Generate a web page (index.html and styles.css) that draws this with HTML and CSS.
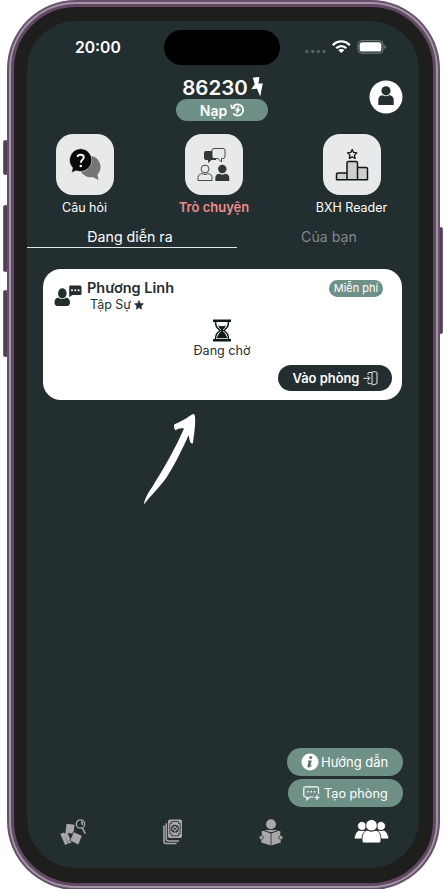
FILE: index.html
```html
<!DOCTYPE html>
<html lang="vi">
<head>
<meta charset="utf-8">
<title>Trò chuyện</title>
<link rel="stylesheet" href="styles.css">
</head>
<body>
<div class="stage">
  <i class="key key-action"></i><i class="key key-up"></i><i class="key key-down"></i><i class="key key-power"></i>
  <div class="phone"><div class="rim"><div class="bezel"><main class="screen">
    <div class="status">
      <span class="time">20:00</span>
      <span class="island"></span>
      <svg class="signals" width="82" height="16" viewBox="0 0 82 16">
        <g fill="#566162"><circle cx="2" cy="11.500" r="1.700"/><circle cx="7.700" cy="11.500" r="1.700"/><circle cx="13.300" cy="11.500" r="1.700"/><circle cx="19" cy="11.500" r="1.700"/></g>
        <g fill="none" stroke="#fff" stroke-width="2.300"><path d="M27.800 5.200C32.800.2 39.800.2 44.800 5.200M31.200 8.300c2.800-2.900 7.400-2.900 10.200 0"/></g>
        <path d="M33.200 10c1.900-1.500 4.300-1.500 6.200 0l-3.100 3.100z" fill="#fff"/>
        <rect x="53" y=".7" width="25" height="12.500" rx="3.800" fill="none" stroke="#7b8586"/>
        <rect x="54.600" y="2.300" width="21.800" height="9.300" rx="2.600" fill="#fff"/><path d="M79.500 4.700c2 .8 2 3.500 0 4.300z" fill="#7b8586"/>
      </svg>
    </div>
    <header class="header">
      <div class="balance">
        <div class="amount"><span>86230</span><svg width="12" height="20" viewBox="0 0 12 20"><path d="M1.800.7 8.400 0 7.500 6.700l4.300-.4L9.200 19.400 6 11.800.2 12.200 3.700 7.300z" fill="#fff"/></svg></div>
        <div class="topup"><span>Nạp</span><svg width="15" height="14" viewBox="0 0 15 14"><path d="M3 3.800A5.600 5.600 0 1 1 3.200 10.500M.8 1.800 2 5.200l3.600-.7" fill="none" stroke="#fff" stroke-width="1.700"/><path d="M8.700 3 5.200 7.700h2L6.500 11l3.900-4.800H8.200z" fill="#fff" stroke="#fff" stroke-width=".5"/></svg></div>
      </div>
      <svg class="avatar" width="34" height="34" viewBox="0 0 34 34"><circle cx="17" cy="17" r="16.500" fill="#fff"/><circle cx="17" cy="10.800" r="4.600" fill="#232e30"/><path d="M9.300 25v-5c0-3 2-4.700 4.300-4.700 2 1.200 4.400 1.200 6.400 0 2.500 0 4.700 1.700 4.700 4.700v5z" fill="#232e30"/></svg>
    </header>
    <section class="shortcuts">
      <div class="shortcut"><div class="tile"><svg width="58" height="61" viewBox="0 0 58 61">
        <path d="M35 22a11 11 0 0 1 6.500 18.500l1 5.500-6-3A11 11 0 0 1 24.500 37z" fill="#747675"/><path d="M24.500 14.700a11.400 11.400 0 1 1-4.300 22l-4.500 2 .8-5a11.400 11.400 0 0 1 8-19z" fill="#080909" stroke="#e8eaea" stroke-width=".6"/><path d="M21.500 23c.3-3 6.300-3 6.300.3 0 2.500-3 2.500-3 5.400" stroke="#fff" stroke-width="1.900" fill="none"/><circle cx="24.800" cy="32" r="1.300" fill="#fff"/></svg></div><span>Câu hỏi</span></div>
      <div class="shortcut current"><div class="tile"><svg width="58" height="61" viewBox="0 0 58 61">
        <path d="M21 17h10v9h-4.500L23 29v-3h-2q-2 0-2-2v-5q0-2 2-2z" fill="#333738"/><path d="M29 14.500h9q2 0 2 2v6q0 2-2 2h-1.500V28L33 24.500h-4q-2 0-2-2v-6q0-2 2-2z" fill="#e8eaea" stroke="#353839" stroke-width=".9"/>
        <circle cx="20" cy="35" r="3.900" fill="none" stroke="#353839" stroke-width=".9"/><path d="M13 46.500v-2.800c0-2.500 1.600-4 4.200-4q2.800 1.700 5.600 0c2.600 0 4.200 1.500 4.200 4v2.800z" fill="none" stroke="#353839" stroke-width=".9"/>
        <circle cx="37.300" cy="35" r="4.200" fill="#333738"/><path d="M30.300 47v-2.800c0-2.800 1.800-4.500 4.200-4.500q2.800 1.700 5.600 0c2.600 0 4.200 1.700 4.200 4.500V47z" fill="#333738"/></svg></div><span>Trò chuyện</span></div>
      <div class="shortcut"><div class="tile"><svg width="58" height="61" viewBox="0 0 58 61">
        <g fill="#cdcfcf" stroke="#111516" stroke-width="1.500" stroke-linejoin="round"><path d="M13.500 45.700v-5.200q0-1.500 1.500-1.500h9v6.700zM34.500 33.500h8.500q1.500 0 1.500 1.500v10.700h-10zM24 45.700V29q0-1.500 1.500-1.500H33q1.500 0 1.500 1.500v16.700z"/><path d="m29.200 15.500 1.400 2.900 3.200.4-2.300 2.300.6 3.200-2.900-1.500-2.900 1.500.6-3.200-2.300-2.300 3.200-.4z" fill="#e8eaea" stroke-width="1.300"/></g></svg></div><span>BXH Reader</span></div>
    </section>
    <nav class="tabs"><span class="tab selected">Đang diễn ra</span><span class="tab"><b>Của bạn</b></span></nav>
    <article class="card">
      <div class="card-top">
        <svg class="speaker" width="28" height="22" viewBox="0 0 28 22"><g fill="#232e30"><ellipse cx="8.300" cy="8.300" rx="4.300" ry="5.100"/><path d="M4 12.500q4 3 8.500 0c2.500.7 3.500 2.500 3.500 5 0 2-.8 3-2.500 3.500H3C1.300 20.500.5 19.500.5 17.500c0-2.500 1-4.300 3.500-5zM16 .5h10q1.500 0 1.500 1.500v6.500q0 1.500-1.500 1.500h-7.500L15.200 12V2q0-1.500.8-1.500z"/></g><g fill="#fff"><circle cx="18" cy="5.300" r="1"/><circle cx="21.300" cy="5.300" r="1"/><circle cx="24.600" cy="5.300" r="1"/></g></svg>
        <div class="person"><strong>Phương Linh</strong><div class="rank"><span>Tập Sự</span><svg width="10" height="10" viewBox="0 0 10 10"><path d="m5 .5 1.300 2.900 3.200.4-2.400 2.200.6 3.200L5 7.600 2.300 9.200 2.900 6 .5 3.800l3.200-.4z" fill="#232e30" stroke="#232e30" stroke-width=".6" stroke-linejoin="round"/></svg></div></div>
        <span class="free">Miễn phí</span>
      </div>
      <div class="waiting"><svg width="20" height="23" viewBox="0 0 20 23"><path d="M1 1.800h18M1 21.200h18" stroke="#111a1c" stroke-width="2.500"/><path d="M3.500 2.500c0 5 1.300 6.500 4.700 9-3.400 2.500-4.700 4-4.700 9M16.500 2.500c0 5-1.300 6.500-4.700 9 3.400 2.500 4.700 4 4.700 9" fill="none" stroke="#111a1c" stroke-width="1.500"/><path d="M6 6.500q4 1.500 8 0-1 2.500-3 4v2q2 1 4 5.800v1H5v-1q2-4.800 4-5.800v-2q-2-1.500-3-4z" fill="#111a1c"/></svg><span>Đang chờ</span></div>
      <div class="enter"><span>Vào phòng</span><svg width="15" height="15" viewBox="0 0 15 15"><path d="M.5 7.300h6M4.500 5l2.300 2.300L4.500 9.600M5 4V2.500q0-1 1-1h3M5 10.500v1q0 1.200 1 1.200h2.500M9 1.500q0-.7 1-.7h2.500q1.500 0 1.500 1.500v9.500q0 1-1 1.200l-3 .8q-1 .2-1-.7z" fill="none" stroke="#fff" stroke-width=".9"/></svg></div>
    </article>
    <div class="pointer"><svg width="54" height="92" viewBox="0 0 54 92"><path d="M1 91.500C1.500 86 5 80 9.500 73.500 21 55 31 38 41 15.500 37 15 35 16 32.500 17.200 31 16 30.500 13 31.500 11.300 37 8.500 42 7 46.500 3 48.500 2 49.500.7 51 1c1 1.500 1.200 3 1.200 7-.2 7-1 13-2.300 22.200-2 .8-3.200-.7-4.200-8.200C38 39 31.500 52 23.500 64.500 16 75 9.500 80.500 1 91.500z" fill="#fff"/></svg></div>
    <div class="actions">
      <div class="action guide"><svg width="18" height="18" viewBox="0 0 18 18"><circle cx="9" cy="9" r="8.500" fill="#fff"/><circle cx="9.700" cy="4.600" r="1.500" fill="#55746a"/><path d="M7 7.700h3.400L9.400 12.500q-.2 1 1.400-.2-1.300 2.300-3.400 2-1-.2-.6-2L7.700 9z" fill="#55746a" stroke="#55746a" stroke-width=".4"/></svg><span>Hướng dẫn</span></div>
      <div class="action create"><svg width="17" height="15" viewBox="0 0 17 15"><path d="M15.500 8V2.300q0-1.500-1.500-1.500H2.300Q.8.800.8 2.300v7.200q0 1.500 1.500 1.500H4v2.700L7 11h3.500M11.500 11.500h5M14 9v5" fill="none" stroke="#fff" stroke-width="1.200"/><path d="M4.200 5.800h1.500M7.500 5.800H9M10.800 5.800h1.500" stroke="#fff" stroke-width="1.500"/></svg><span>Tạo phòng</span></div>
    </div>
    <footer class="dock">
      <svg width="27" height="27" viewBox="0 0 27 27"><g fill="#a9a7a7"><path d="m6.500 4.800 8 1-1 9-8-1z"/><path d="m.3 15 3.600-1.600 4.200 11-3 1.600z"/><path d="m3.700 14.700 3.500-1.500 4.500 10.300-3 1z"/><path d="m13.600 12.700 8.700 3.900-3.800 9.500-8.800-4.500z" stroke="#232e30" stroke-width=".8"/></g><circle cx="20.500" cy="5" r="4.200" fill="none" stroke="#a9a7a7" stroke-width="1.300"/><path d="M21 2.700q2 1 1.200 3.200M22.300 9l3 5.700" stroke="#a9a7a7" stroke-width="1.600" fill="none"/></svg>
      <svg class="deck" width="20" height="26" viewBox="0 0 20 26"><g fill="none" stroke="#a9a7a7" stroke-width="1.600"><path d="M1 6.500v16q0 2 2 2h10.500M3.300 4.200V20q0 2 2 2H16"/></g><rect x="5" y=".5" width="14" height="18.500" rx="1.800" fill="#a9a7a7"/><path d="M8.500 2.500h7v2h1.700v10.300h-1.700v2h-7v-2H6.800V4.500h1.700z" fill="none" stroke="#232e30" stroke-width=".8"/><circle cx="12" cy="9.700" r="3.300" fill="none" stroke="#232e30" stroke-width="1.200"/><path d="m9.800 7.500 4.500 4.500M14.300 7.500 9.800 12" stroke="#232e30" stroke-width=".9"/></svg>
      <svg class="reader" width="24" height="27" viewBox="0 0 24 27"><g fill="#a9a7a7"><circle cx="12" cy="5.200" r="5"/><path d="M12 14.500 4 11.800l-1.700.6v4.200Q.2 17 .5 19q.3 1.500 1.800 1.300v3.200l9.700 3 9.700-3v-3.200q1.500.2 1.800-1.300.3-2-1.800-2.400v-4.200l-1.700-.6z"/><path d="M5 11q7-.2 14 0-3.500 1.500-7 2.200Q8.500 12.500 5 11z"/></g><path d="M12 14v12.500M2.300 12.400v4.200q2 .3 2 1.900t-2 1.800M21.700 12.400v4.200q-2 .3-2 1.900t2 1.800" fill="none" stroke="#232e30" stroke-width=".8"/></svg>
      <svg width="35" height="25" viewBox="0 0 35 25"><g fill="#fff" stroke="#232e30" stroke-width=".9"><circle cx="8" cy="7" r="4.500"/><circle cx="27" cy="7" r="4.500"/><path d="M5 11q3 1.200 6 0l2 9H1.500q-1.200 0-1.200-1.500Q.8 13 5 11zM30 11q-3 1.200-6 0l-2 9h11.500q1.200 0 1.200-1.500Q34.200 13 30 11z"/><circle cx="17.500" cy="6.300" r="5.800"/><path d="M13 11.200q4.500 2.200 9 0c3.500 1 5 4.800 5 9.800 0 2-.5 3-2.500 3h-14c-2 0-2.500-1-2.500-3 0-5 1.500-8.800 5-9.800z"/></g></svg>
    </footer>
  </main></div></div></div>
</div>
</body>
</html>
```
FILE: styles.css
```css
* { box-sizing: border-box; }
body { margin: 0; background: #fff; font-family: Inter, "Noto Sans", sans-serif; color: #fff; }
svg { display: block; flex: none; overflow: visible; }
span, strong { white-space: nowrap; }
.stage { position: relative; width: 444px; height: 889px; padding-left: 7px; overflow: hidden; }
.phone { position: relative; width: 433px; height: 890px; padding: 2px; border-radius: 69px; background: #65506a; }
.rim { height: 100%; padding: 2px; border-radius: 67px; background: #a295a7; }
.bezel { height: 100%; padding: 14px 13px; border: 3px solid #624863; border-radius: 65px; background: #1e1f1d; }
.screen { display: flex; flex-direction: column; height: 847px; width: 392px; border-radius: 49px; background: #232e30; overflow: hidden; }
.key { position: absolute; left: 3px; width: 5px; background: #583d5b; border: 1px solid #765e79; border-radius: 2px; }
.key-action { top: 140px; height: 35px; }
.key-up { top: 205px; height: 67px; }
.key-down { top: 290px; height: 67px; }
.key-power { left: auto; right: 1px; top: 227px; height: 107px; }

.status { display: flex; flex: none; height: 54px; padding: 9px 0 0 48px; }
.time { width: 89px; padding-top: 8px; font-size: 15.700px; line-height: 20px; font-weight: 600; }
.island { width: 116px; height: 35px; border-radius: 18px; background: #000; }
.signals { margin: 10px 0 0 25px; }

.header { display: flex; flex: none; height: 59px; }
.balance { width: 92px; margin-left: 149px; }
.amount { display: flex; align-items: center; justify-content: center; gap: 3px; height: 24px; padding-left: 1px; font-size: 20.500px; font-weight: 600; }
.topup { display: flex; align-items: center; justify-content: center; gap: 3px; height: 22px; padding-left: 1px; border-radius: 11px; background: #6f9087; font-size: 14px; font-weight: 600; }
.avatar { margin: 5px 0 0 101px; }

.shortcuts { display: grid; flex: none; grid-template-columns: 115px 144px 131px; height: 91px; }
.shortcut { display: flex; flex-direction: column; align-items: center; gap: 4px; font-size: 12.500px; line-height: 17px; }
.tile { width: 58px; height: 61px; border-radius: 17px; background: #e8eaea; }
.current { color: #ee8b8d; font-size: 13px; font-weight: 600; }

.tabs { display: flex; flex: none; height: 23px; font-size: 14.200px; line-height: 23px; }
.tab { width: 210px; height: 23px; text-align: center; padding-right: 4px; }
.selected { border-bottom: 1px solid #e3e6e6; }
.tab + .tab { width: 182px; padding: 0 0 0 2px; color: #80898a; }
.tab b { font-weight: 400; }

.card { display: flex; flex-direction: column; flex: none; height: 131px; width: 359px; margin: 21px 0 0 16px; padding: 9px 10px 9px 11px; border-radius: 18px; background: #fff; color: #232e30; }
.card-top { display: flex; height: 41px; }
.speaker { margin-top: 7px; }
.person { margin-left: 5px; font-size: 14.500px; line-height: 19px; }
.person strong { font-weight: 600; }
.rank { display: flex; align-items: center; gap: 3px; height: 15px; padding-left: 3px; font-size: 12.500px; }
.free { margin: 2px 9px 0 auto; width: 54px; height: 17px; border-radius: 9px; background: #6f9087; color: #fff; font-size: 11px; line-height: 17px; text-align: center; }
.waiting { display: flex; flex-direction: column; align-items: center; height: 46px; padding-right: 2px; font-size: 12.600px; line-height: 17px; }
.enter { display: flex; align-items: center; justify-content: center; gap: 4px; align-self: flex-end; width: 114px; height: 26px; padding-left: 1px; border-radius: 13px; background: #232e30; color: #fff; font-size: 12.900px; font-weight: 600; }
.pointer { flex: none; height: 348px; padding: 13px 0 0 116px; }
.actions { display: flex; flex-direction: column; flex: none; align-items: flex-end; gap: 3px; padding-right: 16px; }
.action { display: flex; align-items: center; height: 28px; border-radius: 14px; background: #6f9087; font-size: 13px; }
.guide { width: 116px; padding-left: 14px; gap: 2px; }
.create { width: 115px; padding-left: 15px; gap: 4px; font-size: 12.700px; }
.dock { display: flex; padding: 12px 30px 0 33px; justify-content: space-between; }
.deck { margin-left: 5px; }
.reader { margin-left: 4px; }
```
